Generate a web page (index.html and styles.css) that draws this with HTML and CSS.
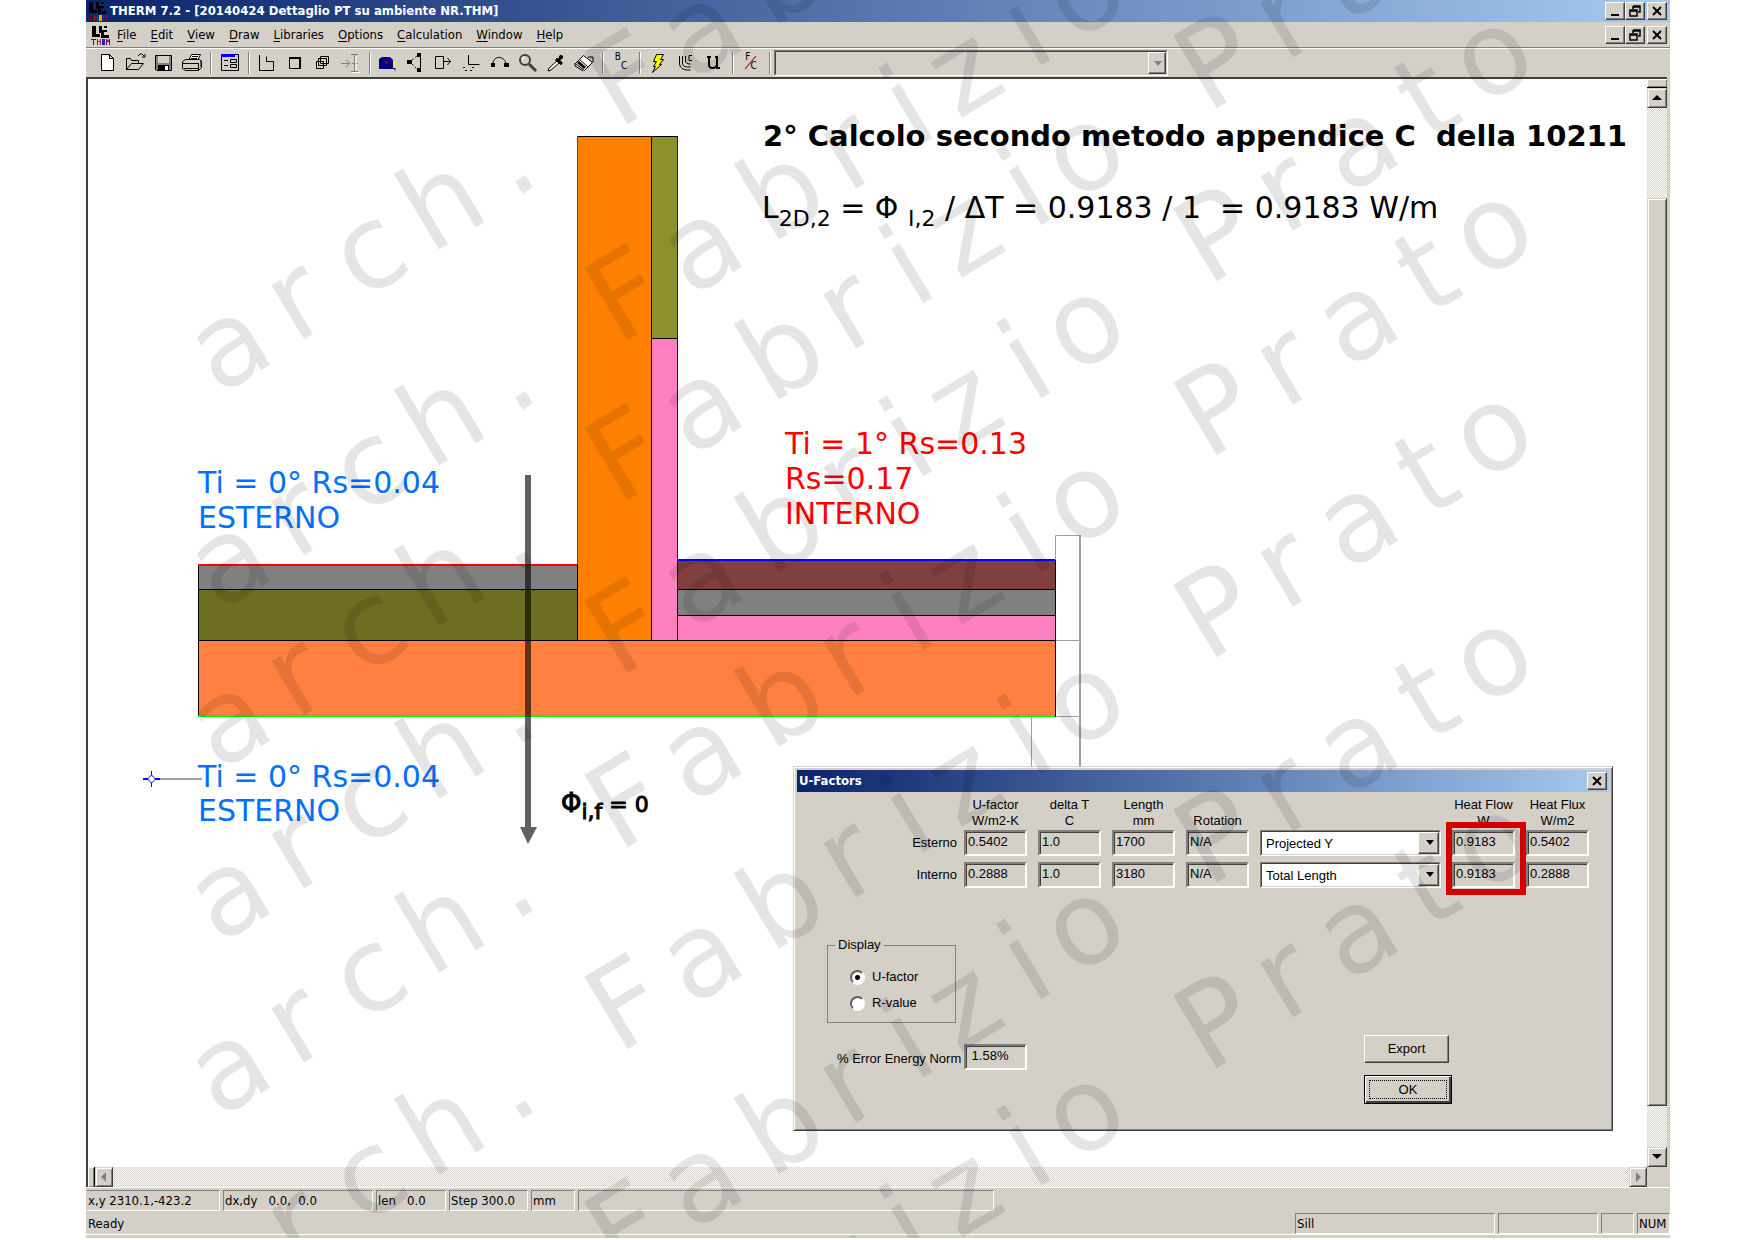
FILE: index.html
```html
<!DOCTYPE html>
<html lang="it">
<head>
<meta charset="utf-8">
<title>THERM 7.2 - [20140424 Dettaglio PT su ambiente NR.THM]</title>
<link rel="stylesheet" href="styles.css">
</head>
<body>
<div class="window">
  <header class="titlebar">
    <svg class="app-icon" width="20" height="20" viewBox="0 0 20 20" aria-hidden="true"><path d="M1 1h4v8h4v3H1zM8 1h3v4h5v2h-3v3h5v3h-8V8H8zM13 1h3v2h-3z" fill="#000"/><path d="M0 14h5v1H3v5H2v-5H0z" fill="#800000"/><path d="M6 14h1v2h2v-2h1v6H9v-3H7v3H6z" fill="#a02020"/><path d="M11 14h3v6h-3z" fill="#c0c000"/><path d="M15 14h1l1 2 1-2h1v6h-1v-3h-2v3h-1z" fill="#800080"/></svg>
    <h1 class="title">THERM 7.2 - [20140424 Dettaglio PT su ambiente NR.THM]</h1>
    <div class="win-buttons">
      <button class="wb" aria-label="Minimize"><svg width="14" height="12"><path d="M3 9h8v2H3z"/></svg></button>
      <button class="wb" aria-label="Restore"><svg width="14" height="12"><path d="M5 1h7v6h-2M5 1v3M5 2h7M2 5h7v6H2zM2 6h7" fill="none" stroke="#000" stroke-width="1.5"/></svg></button>
      <button class="wb close" aria-label="Close"><svg width="14" height="12"><path d="M3 2l8 8M11 2l-8 8" stroke="#000" stroke-width="2"/></svg></button>
    </div>
  </header>
  <nav class="menubar">
    <svg class="app-icon" width="20" height="20" viewBox="0 0 20 20" aria-hidden="true"><path d="M1 1h4v8h4v3H1zM8 1h3v4h5v2h-3v3h5v3h-8V8H8zM13 1h3v2h-3z" fill="#000"/><path d="M0 14h5v1H3v5H2v-5H0z" fill="#800000"/><path d="M6 14h1v2h2v-2h1v6H9v-3H7v3H6z" fill="#a02020"/><path d="M11 14h3v6h-3z" fill="#2020c0"/><path d="M15 14h1l1 2 1-2h1v6h-1v-3h-2v3h-1z" fill="#800080"/></svg>
    <a href="#"><u>F</u>ile</a><a href="#"><u>E</u>dit</a><a href="#"><u>V</u>iew</a><a href="#"><u>D</u>raw</a><a href="#"><u>L</u>ibraries</a><a href="#"><u>O</u>ptions</a><a href="#"><u>C</u>alculation</a><a href="#"><u>W</u>indow</a><a href="#"><u>H</u>elp</a>
    <div class="win-buttons">
      <button class="wb" aria-label="Minimize document"><svg width="14" height="12"><path d="M3 9h8v2H3z"/></svg></button>
      <button class="wb" aria-label="Restore document"><svg width="14" height="12"><path d="M5 1h7v6h-2M5 1v3M5 2h7M2 5h7v6H2zM2 6h7" fill="none" stroke="#000" stroke-width="1.5"/></svg></button>
      <button class="wb close" aria-label="Close document"><svg width="14" height="12"><path d="M3 2l8 8M11 2l-8 8" stroke="#000" stroke-width="2"/></svg></button>
    </div>
  </nav>
  <div class="toolbar">
    <button class="tool" aria-label="New"><svg viewBox="0 0 24 20"><path d="M5.500 1.500h8l4 4v12h-12zM13.500 1.500v4h4" fill="#fff" stroke="#000"/></svg></button>
    <button class="tool" aria-label="Open"><svg viewBox="0 0 24 20"><path d="M2.500 16.500v-11h4l1 2h7v3h-7l-5 6h12l5-6h-5" fill="#d4d0c8" stroke="#000"/><path d="M14 3l2-2h2l2 2M21 1v3h-3" fill="none" stroke="#000"/></svg></button>
    <button class="tool" aria-label="Save"><svg viewBox="0 0 24 20"><path d="M3.500 2.500h16v15h-15l-1-1z" fill="#808080" stroke="#000"/><path d="M6 3h11v7H6z" fill="#d4d0c8"/><path d="M6 12h11v6H6z"/><path d="M13 13h3v4h-3z" fill="#fff"/></svg></button>
    <button class="tool" aria-label="Print"><svg viewBox="0 0 24 20"><path d="M8.500 7.500l3-6h9l-3 6" fill="#fff" stroke="#000"/><path d="M2.500 8.500l3-2h14l2 2v6l-3 3h-13l-3-2z" fill="#d4d0c8" stroke="#000"/><path d="M3 10.500h15M4 15.500h14M12 3.500h6M11 5.500h6M18.500 10v7M21 7v7" stroke="#000"/></svg></button>
    <span class="sep wide-gap"></span>
    <button class="tool" aria-label="Form"><svg viewBox="0 0 24 20"><path d="M3.500 1.500h17v16h-17z" fill="#d4d0c8" stroke="#000"/><path d="M3 1h14v3H3z" fill="#00f"/><path d="M6 7.500h4M6 12.500h4M12.500 6.500h6v3h-6zM12.500 11.500h6v3h-6z" fill="none" stroke="#000"/></svg></button>
    <span class="sep"></span>
    <button class="tool" aria-label="Draw polygon"><svg viewBox="0 0 24 20"><path d="M4.500 2v15.500h14v-9h-7v-5" fill="none" stroke="#000"/></svg></button>
    <button class="tool" aria-label="Draw rectangle"><svg viewBox="0 0 24 20"><path d="M6.500 5.500h11v10h-11z" fill="none" stroke="#000"/><path d="M6 5h12M17 5v11" stroke="#000" stroke-width="2"/></svg></button>
    <button class="tool" aria-label="Repeat"><svg viewBox="0 0 24 20"><path d="M9.500 3.500h8v7h-8zM7.500 5.500h8v7h-8zM5.500 8.500h7v7h-7z" fill="none" stroke="#000"/></svg></button>
    <button class="tool" aria-label="Insert point"><svg viewBox="0 0 24 20"><path d="M2 10.500h8M7 7l4 3-4 4M12 1.500h7M15.500 2v16M12 18.500h7M13 10.500h6" fill="none" stroke="#808080"/><path d="M17 3v15M13 19.500h8" stroke="#fff"/></svg></button>
    <span class="sep"></span>
    <button class="tool" aria-label="Tape measure"><svg viewBox="0 0 24 20"><path d="M3 6l3-2h8l3 3v9H3z" fill="#000080"/><path d="M9 8h3v3H9z" fill="#800000"/><path d="M17 8h2v4h-2z" fill="#ff0"/><path d="M17 15.500h2v2" fill="none" stroke="#000080"/></svg></button>
    <button class="tool" aria-label="Move point"><svg viewBox="0 0 24 20"><path d="M3 7h5v4H3zM13 0h4v4h-4zM13 15h4v4h-4z"/><path d="M16.500 2v15" stroke="#000"/><path d="M8 7l5-4M8 11l5 5" stroke="#000" stroke-dasharray="2 2"/></svg></button>
    <button class="tool" aria-label="Move polygon"><svg viewBox="0 0 24 20"><path d="M3.500 3.500h8v12h-8zM11 8.500h8M15.500 5l3 3.500-3 3.500" fill="none" stroke="#000"/></svg></button>
    <button class="tool" aria-label="Edit origin"><svg viewBox="0 0 24 20"><path d="M8.500 2v9.500h11" fill="none" stroke="#000"/><path d="M3 14.500h3M5 17.500h3M10 17.500h3M12 14.500h3" stroke="#000" stroke-dasharray="2 1"/></svg></button>
    <button class="tool" aria-label="Rotate"><svg viewBox="0 0 24 20"><path d="M5 10c1-7 10-8 13 0" fill="none" stroke="#000"/><path d="M3 10h4v4H3zM16 10h5v4h-5z"/></svg></button>
    <button class="tool" aria-label="Zoom"><svg viewBox="0 0 24 20"><circle cx="9" cy="7" r="5" fill="#d4d0c8" stroke="#404040" stroke-width="2"/><path d="M6 6l2-2" stroke="#fff" stroke-width="2"/><path d="M13 11l7 7" stroke="#404040" stroke-width="3"/></svg></button>
    <button class="tool" aria-label="Eyedropper"><svg viewBox="0 0 24 20"><path d="M13 8l-8 7-1 3 3-1 8-7" fill="#fff" stroke="#000"/><path d="M12 6l6 5M14 8l4-5" stroke="#000" stroke-width="3"/><circle cx="17" cy="4" r="2"/></svg></button>
    <button class="tool" aria-label="Fill voids"><svg viewBox="0 0 24 20"><path d="M3.500 10.500l8-8 9 7-8 8z" fill="#fff" stroke="#000"/><path d="M7 6l9 8M3 10v3l8 5M16 4l5 0v5" fill="none" stroke="#000"/><path d="M7 8l7 6-2 2-7-6z"/></svg></button>
    <span class="sep"></span>
    <button class="tool letters" aria-label="Boundary conditions"><span>B</span><sub>C</sub></button>
    <span class="sep"></span>
    <button class="tool" aria-label="Calculate"><svg viewBox="0 0 24 20"><path d="M10.500 1.500h7l-3 5h3l-4 5h2l-9 8 3-6h-2l3-5h-3z" fill="#ff0" stroke="#000"/></svg></button>
    <button class="tool" aria-label="Show results"><svg viewBox="0 0 24 20"><path d="M5.500 3v8q1 6 8 6h3M8.500 3v7q0 4 5 4h3M11.500 3v5q0 3 5 3M18 2.500h-3v5h3" fill="none" stroke="#000"/></svg></button>
    <button class="tool" aria-label="Show U-factors"><svg viewBox="0 0 24 20"><path d="M5 4h4M7 4v8q0 3 4 3 3 0 4-3M13 4h2v11h3" fill="none" stroke="#000" stroke-width="2"/></svg></button>
    <span class="sep"></span>
    <button class="tool letters" aria-label="Temperature units"><span>F</span><i></i><sub>C</sub></button>
    <span class="sep"></span>
    <span class="combo material"><select disabled aria-label="Material"><option></option></select></span>
  </div>

  <main class="workspace">
    <div class="canvas">
      <svg class="drawing" aria-label="Thermal bridge section">
        <g transform="translate(-88,-79)">
          <g fill="none" stroke="#a0a0a0">
            <path d="M1055.500 716.500V535.500H1080M1055 640.500h25M1055 716.500h25M1031.500 717v60"/>
            <path d="M1080 535v240" stroke-width="2"/>
          </g>
          <g stroke="#000" shape-rendering="crispEdges">
            <rect x="198.500" y="564.500" width="379" height="25" fill="#808080"/>
            <rect x="198.500" y="589.500" width="379" height="51" fill="#6e6e22"/>
            <rect x="577.500" y="136.500" width="74" height="504" fill="#ff8000"/>
            <rect x="651.500" y="136.500" width="26" height="202" fill="#8e902e"/>
            <rect x="651.500" y="338.500" width="26" height="302" fill="#ff80c0"/>
            <rect x="677.500" y="560.500" width="378" height="29" fill="#804040"/>
            <rect x="677.500" y="589.500" width="378" height="26" fill="#808080"/>
            <rect x="677.500" y="615.500" width="378" height="25" fill="#ff80c0"/>
            <rect x="198.500" y="640.500" width="857" height="76" fill="#ff8040"/>
          </g>
          <g fill="none" shape-rendering="crispEdges">
            <path d="M198 565h379" stroke="#f00" stroke-width="2"/>
            <path d="M577.500 136v429" stroke="#f00"/>
            <path d="M677.500 136v424" stroke="#00f"/>
            <path d="M677 560h378" stroke="#00f" stroke-width="2"/>
            <path d="M198 716h857" stroke="#0f0" stroke-width="2"/>
            <path d="M160 779h42" stroke="#a0a0a0" stroke-width="2"/>
            <path d="M143 779h17" stroke="#00f" stroke-width="2"/>
            <path d="M151.500 771v16" stroke="#00f"/>
          </g>
          <path d="M151.500 775l4 4-4 4-4-4z" fill="#fff" stroke="#00f"/>
          <path d="M525 475h6v352h6l-9 17-8-17h5z" fill="#000" fill-opacity=".62"/>

          <text class="heading" x="763" y="146" xml:space="preserve">2° Calcolo secondo metodo appendice C  della 10211</text>
          <text class="note" x="762" y="218" xml:space="preserve">L<tspan class="sub" dy="8">2D,2</tspan><tspan dy="-8"> = Φ </tspan><tspan class="sub" dy="8">I,2</tspan><tspan dy="-8"> / ΔT = 0.9183 / 1  = 0.9183 W/m</tspan></text>
          <text class="note red" x="785" y="454">Ti = 1° Rs=0.13</text>
          <text class="note red" x="785" y="489">Rs=0.17</text>
          <text class="note red" x="785" y="524">INTERNO</text>
          <text class="note blue" x="198" y="493">Ti = 0° Rs=0.04</text>
          <text class="note blue" x="198" y="528">ESTERNO</text>
          <text class="note blue" x="198" y="787">Ti = 0° Rs=0.04</text>
          <text class="note blue" x="198" y="821">ESTERNO</text>
          <text class="flux" x="561" y="812">Φ<tspan class="sub" dy="7">i,f</tspan><tspan class="small" dy="-7"> = 0</tspan></text>
        </g>
      </svg>
    </div>
    <div class="vscroll">
      <span class="split"></span>
      <button class="sb" aria-label="Scroll up"><svg width="10" height="6"><path d="M5 0l5 5H0z"/></svg></button>
      <span class="gap-top"></span><span class="thumb"></span><span class="gap-bottom"></span>
      <button class="sb" aria-label="Scroll down"><svg width="10" height="6"><path d="M0 0h10L5 5z"/></svg></button>
    </div>
    <div class="hscroll">
      <span class="split"></span>
      <button class="sb" disabled aria-label="Scroll left"><svg width="6" height="10"><path d="M0 5l5-5v10z" fill="#808080"/></svg></button>
      <button class="sb" disabled aria-label="Scroll right"><svg width="6" height="10"><path d="M6 5L1 0v10z" fill="#808080"/></svg></button>
    </div>
    <div class="corner"></div>
  </main>

  <footer class="status">
    <div class="coords">
      <span class="cell xy">x,y 2310.1,-423.2</span><span class="cell dxy">dx,dy&nbsp;&nbsp; 0.0,&nbsp; 0.0</span><span class="cell len">len&nbsp;&nbsp; 0.0</span><span class="cell step">Step 300.0</span><span class="cell unit">mm</span><span class="cell blank"></span>
    </div>
    <div class="ready">
      <span class="msg">Ready</span><span class="cell sill">Sill</span><span class="cell wide"></span><span class="cell lock"></span><span class="cell lock">NUM</span>
    </div>
  </footer>

  <section class="dialog" role="dialog" aria-label="U-Factors">
    <div class="dialog-title"><h2>U-Factors</h2><button class="wb" aria-label="Close dialog"><svg width="14" height="12"><path d="M3 2l8 8M11 2l-8 8" stroke="#000" stroke-width="2"/></svg></button></div>
    <div class="factors">
      <span></span><span class="head">U-factor<br>W/m2-K</span><span class="head">delta T<br>C</span><span class="head">Length<br>mm</span><span class="head">Rotation</span><span></span><span class="head">Heat Flow<br>W</span><span class="head">Heat Flux<br>W/m2</span>
      <label for="e1">Esterno</label><input id="e1" class="field" readonly value="0.5402"><input class="field" readonly aria-label="Esterno delta T" value="1.0"><input class="field" readonly aria-label="Esterno length" value="1700"><input class="field" readonly aria-label="Esterno rotation" value="N/A"><span class="combo"><select aria-label="Esterno length type"><option>Projected Y</option></select></span><input class="field" readonly aria-label="Esterno heat flow" value="0.9183"><input class="field" readonly aria-label="Esterno heat flux" value="0.5402">
      <label for="i1">Interno</label><input id="i1" class="field" readonly value="0.2888"><input class="field" readonly aria-label="Interno delta T" value="1.0"><input class="field" readonly aria-label="Interno length" value="3180"><input class="field" readonly aria-label="Interno rotation" value="N/A"><span class="combo"><select aria-label="Interno length type"><option>Total Length</option></select></span><input class="field" readonly aria-label="Interno heat flow" value="0.9183"><input class="field" readonly aria-label="Interno heat flux" value="0.2888">
    </div>
    <div class="lower">
      <div>
        <fieldset>
          <legend>Display</legend>
          <label><input type="radio" name="display" checked>U-factor</label>
          <label><input type="radio" name="display">R-value</label>
        </fieldset>
        <div class="error"><label for="err">% Error Energy Norm</label><input id="err" class="field" readonly value=" 1.58%"></div>
      </div>
      <div class="actions"><button class="push">Export</button><button class="push default">OK</button></div>
    </div>
  </section>

  <svg class="watermark" aria-hidden="true">
    <defs>
      <text id="author" rotate="-31" xml:space="preserve" x="218 295 361 430 512 580 618 690 770 847 914 958 1032 1073 1150 1207 1284 1346 1427 1481" y="396 345 301 255 200 155 130 82 29 -22 -67 -96 -145 -173 -224 -262 -313 -353 -406 -442">arch. Fabrizio Prato</text>
    </defs>
    <g transform="translate(-86,0)">
      <use href="#author"/>
      <use href="#author" y="216"/>
      <use href="#author" y="376"/>
      <use href="#author" y="549"/>
      <use href="#author" y="723"/>
      <use href="#author" y="925"/>
      <use href="#author" y="1150"/>
      <use href="#author" y="1336"/>
    </g>
  </svg>
  <div class="highlight"></div>
</div>
</body>
</html>
```
FILE: styles.css
```css
* { box-sizing: border-box; }
body { margin: 0; background: #fff; color: #000; font: 13px/16px "DejaVu Sans Condensed", "DejaVu Sans", sans-serif; }
button { font: inherit; color: inherit; padding: 0; border: 0; background: none; }
h1, h2 { margin: 0; font-size: 13px; line-height: 16px; font-weight: bold; color: #fff; }

.window { position: relative; display: flex; flex-direction: column; min-height: calc(100vh - 2px); margin: 0 84px 0 86px; background: #d4d0c8; overflow: hidden; }

.titlebar { display: flex; align-items: center; height: 22px; padding: 0 3px 0 2px; background: linear-gradient(90deg, #0a246a, #a6caf0); }
.titlebar .title { margin-left: 2px; }
.app-icon { flex: none; }
.win-buttons { display: flex; margin-left: auto; }
.wb { display: flex; align-items: center; justify-content: center; width: 20px; height: 18px; background: #d4d0c8; border: 1px solid; border-color: #fff #404040 #404040 #fff; box-shadow: inset -1px -1px #808080; }
.wb.close { margin-left: 2px; }

.menubar { display: flex; align-items: center; height: 25px; padding: 0 3px 0 5px; }
.menubar a { margin-left: 14px; color: #000; text-decoration: none; }
.menubar .app-icon + a { margin-left: 6px; }
.menubar u { text-underline-offset: 2px; }

.toolbar { display: flex; align-items: center; height: 30px; padding-left: 8px; border-top: 1px solid #808080; box-shadow: inset 0 1px #fff; }
.tool { flex: none; display: flex; align-items: center; justify-content: center; width: 28px; height: 22px; }
.tool svg { width: 24px; height: 20px; }
.sep { flex: none; width: 2px; height: 22px; margin: 0 3px 0 4px; border-left: 1px solid #808080; border-right: 1px solid #fff; }
.letters { position: relative; font-size: 10px; line-height: 10px; align-items: flex-start; }
.letters sub { font-size: 10px; line-height: 10px; margin-top: 9px; vertical-align: baseline; }
.letters i { position: absolute; left: 13px; top: 2px; width: 1px; height: 17px; background: #a00000; transform: rotate(40deg); }

.combo { position: relative; display: block; border: 1px solid; border-color: #808080 #fff #fff #808080; }
.combo select { display: block; width: 100%; height: 100%; padding: 2px 4px 0; font: 13px/16px "Liberation Sans", Arial, sans-serif; color: #000; background: #fff; appearance: none; border: 1px solid; border-color: #404040 #d4d0c8 #d4d0c8 #404040; border-radius: 0; opacity: 1; }
.combo::before { content: ""; position: absolute; right: 1px; top: 1px; bottom: 1px; width: 19px; background: #d4d0c8; border: 1px solid; border-color: #fff #404040 #404040 #fff; box-shadow: inset -1px -1px #808080; }
.combo::after { content: ""; position: absolute; right: 6px; top: 9px; border: 4px solid transparent; border-top: 5px solid #000; border-bottom: 0; }
.combo.material { width: 394px; height: 26px; }
.combo.material select { background: #d4d0c8; }
.combo.material::before { width: 16px; }
.combo.material::after { right: 5px; top: 10px; border-top-color: #808080; }

.workspace { flex: 1; display: grid; grid-template-columns: 1fr 20px; grid-template-rows: 1fr 20px; margin-right: 3px; border-top: 2px solid #000; border-left: 2px solid #000; }
.workspace { border-color: #404040; }
.canvas { position: relative; background: #fff; }
.drawing { position: absolute; inset: 0; width: 100%; height: 100%; font-family: "DejaVu Sans", Verdana, sans-serif; }
.heading { font-size: 29px; font-weight: bold; }
.note { font-size: 30px; }
.note .sub { font-size: 22px; }
.red { fill: #f00; }
.blue { fill: #0070ff; }
.flux { font-size: 26px; stroke: #000; stroke-width: 1px; }
.flux .sub, .flux .small { font-size: 22px; }

.vscroll, .hscroll { display: flex; background: repeating-conic-gradient(#d4d0c8 0 25%, #fff 0 50%) 0 0 / 2px 2px; }
.vscroll { flex-direction: column; }
.vscroll .split { height: 9px; border-bottom: 1px solid #000; background: #d4d0c8; box-shadow: inset 1px 1px #fff, inset -1px -1px #808080; }
.sb { flex: none; display: flex; align-items: center; justify-content: center; width: 20px; height: 20px; background: #d4d0c8; border: 1px solid; border-color: #d4d0c8 #404040 #404040 #d4d0c8; box-shadow: inset 1px 1px #fff, inset -1px -1px #808080; }
.gap-top { flex: 90; }
.thumb { flex: 907; background: #d4d0c8; border: 1px solid; border-color: #d4d0c8 #404040 #404040 #d4d0c8; box-shadow: inset 1px 1px #fff, inset -1px -1px #808080; }
.gap-bottom { flex: 41; }
.hscroll .split { width: 7px; border-right: 1px solid #000; background: #d4d0c8; box-shadow: inset 1px 1px #fff, inset -1px -1px #808080; }
.hscroll .sb { width: 18px; }
.hscroll .sb:last-child { margin-left: auto; }
.corner { background: #d4d0c8; }

.status { padding-bottom: 3px; box-shadow: inset 0 1px #fff; }
.coords, .ready { display: flex; gap: 3px; white-space: nowrap; }
.coords { padding-top: 3px; }
.ready { padding-top: 2px; border-bottom: 1px solid #fff; }
.cell { height: 21px; padding: 2px 1px; border: 1px solid; border-color: #808080 #fff #fff #808080; }
.msg { flex: 1; padding-top: 3px; padding-left: 2px; }
.xy { width: 134px; border-left-color: #d4d0c8; }
.dxy { width: 150px; }
.len { width: 70px; }
.step { width: 79px; }
.unit { width: 44px; }
.blank { width: 416px; }
.sill { width: 200px; }
.wide { width: 100px; }
.lock { width: 33px; }

.dialog { position: absolute; left: 707px; top: 766px; width: 820px; height: 365px; padding: 3px; background: #d4d0c8; border: 1px solid; border-color: #d4d0c8 #404040 #404040 #d4d0c8; box-shadow: inset 1px 1px #fff, inset -1px -1px #808080; font: 13px/16px "Liberation Sans", Arial, sans-serif; }
.dialog-title { display: flex; align-items: center; justify-content: space-between; height: 22px; padding: 0 2px; background: linear-gradient(90deg, #0a246a, #a6caf0); }
.dialog-title h2 { font-family: "DejaVu Sans Condensed", "DejaVu Sans", sans-serif; }
.factors { display: grid; grid-template-columns: 156px 63px 63px 63px 63px 181px 63px 63px; grid-template-rows: 28px 26px 26px; gap: 6px 11px; margin-top: 4px; }
.factors .head { align-self: end; text-align: center; margin: 0 -6px -5px; }
.factors label { text-align: right; padding-top: 5px; margin-right: -4px; }
.field { width: 63px; height: 26px; padding: 0 2px 3px; font: 13px/16px "Liberation Sans", Arial, sans-serif; color: #000; background: #d4d0c8; border: 2px solid; border-color: #808080 #fff #fff #808080; box-shadow: inset 1px 1px #404040; border-radius: 0; }
.lower { display: flex; justify-content: space-between; padding: 49px 157px 0 30px; }
fieldset { width: 129px; height: 86px; margin: 0; padding: 16px 22px 0; border: 1px solid #808080; }
legend { margin-left: -15px; padding: 0 3px; }
fieldset label { display: flex; align-items: center; gap: 7px; margin-bottom: 10px; }
input[type="radio"] { appearance: none; width: 15px; height: 15px; margin: 0; border: 2px solid; border-color: #606060 #fff #fff #606060; border-radius: 50%; background: #fff; }
input[type="radio"]:checked { background: radial-gradient(circle, #000 2px, #fff 3px); }
.error { display: flex; gap: 8px; margin: 21px 0 0 10px; }
.error label { width: 119px; padding-top: 7px; white-space: nowrap; }
.actions { display: flex; flex-direction: column; align-items: flex-start; gap: 12px; padding-top: 98px; }
.push { width: 85px; height: 28px; background: #d4d0c8; border: 1px solid; border-color: #fff #404040 #404040 #fff; box-shadow: inset -1px -1px #808080; }
.push.default { width: 88px; height: 29px; border: 1px solid #000; box-shadow: inset 1px 1px #fff, inset -2px -2px #404040; outline: 1px dotted #000; outline-offset: -6px; }

.toolbar .wide-gap { margin: 0 4px; }

.watermark { position: absolute; inset: 0; width: 100%; height: 100%; fill: #000; fill-opacity: .1; font: 116px "DejaVu Sans", Verdana, sans-serif; pointer-events: none; }
.highlight { position: absolute; left: 1360px; top: 822px; width: 80px; height: 73px; border: 6px solid #d40000; pointer-events: none; }
```
